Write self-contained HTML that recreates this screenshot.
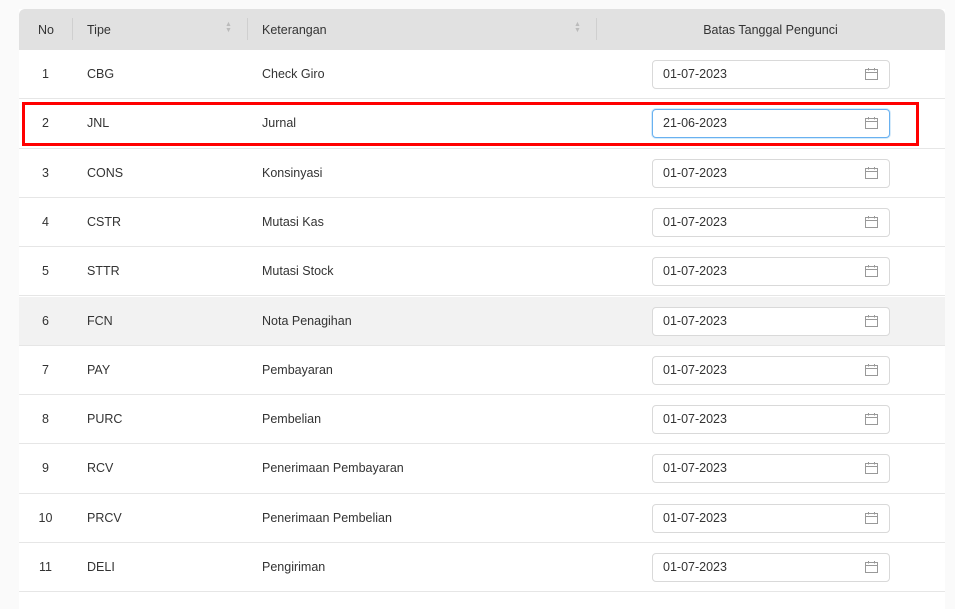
<!DOCTYPE html>
<html><head><meta charset="utf-8"><style>
body{margin:0;width:955px;height:589px;overflow:hidden;background:#fafafa;font-family:"Liberation Sans",sans-serif;font-size:12.5px;color:#333;position:relative}
.t{position:absolute;left:19px;top:9px;width:926px;height:600px;background:#fff}
.h{position:absolute;left:0;top:0;width:926px;height:41px;background:#e1e1e1;border-radius:6px 6px 0 0}
.c{position:absolute;line-height:16px}
.sep{position:absolute;top:9px;width:1px;height:22px;background:#cfcfcf}
.r{position:absolute;left:0;width:926px;border-bottom:1px solid #e6e6e6;box-sizing:border-box}
.in{position:absolute;left:633px;width:238px;height:29px;border:1px solid #d9d9d9;border-radius:4px;box-sizing:border-box;background:#fff}
.in span{position:absolute;left:10px;top:6px}
.in svg{position:absolute;right:11px;top:7px}
.sort{position:absolute;top:13px;font-size:7px;color:#bbb;line-height:6px}
</style></head><body>
<div class="t">
<div class="h">
<div class="c" style="left:19px;top:13px">No</div>
<div class="sep" style="left:53px"></div>
<div class="c" style="left:68px;top:13px">Tipe</div>
<div class="sort" style="left:206px">▲<br>▼</div>
<div class="sep" style="left:228px"></div>
<div class="c" style="left:243px;top:13px">Keterangan</div>
<div class="sort" style="left:555px">▲<br>▼</div>
<div class="sep" style="left:577px"></div>
<div class="c" style="left:577px;width:349px;text-align:center;top:13px">Batas Tanggal Pengunci</div>
</div>
<div id="rows"></div>
</div>
<div style="position:absolute;left:22px;top:102px;width:897px;height:44px;border:3px solid #f00;box-sizing:border-box"></div>
<script>
var d=[["1","CBG","Check Giro"],["2","JNL","Jurnal"],["3","CONS","Konsinyasi"],["4","CSTR","Mutasi Kas"],["5","STTR","Mutasi Stock"],["6","FCN","Nota Penagihan"],["7","PAY","Pembayaran"],["8","PURC","Pembelian"],["9","RCV","Penerimaan Pembayaran"],["10","PRCV","Penerimaan Pembelian"],["11","DELI","Pengiriman"]];
var ico='<svg width="13" height="12" viewBox="0 0 13 12" fill="none" stroke="#999" stroke-width="1"><rect x="0.5" y="1.5" width="12" height="10"/><line x1="0.5" y1="4.5" x2="12.5" y2="4.5"/><line x1="3.5" y1="0" x2="3.5" y2="2.5"/><line x1="9.5" y1="0" x2="9.5" y2="2.5"/></svg>';
var h="";
d.forEach(function(r,i){var top=41+i*49.3;
h+='<div class="r" style="top:'+top+'px;height:49.3px;'+(i==5?'background:#f2f2f2':'')+'">'
+'<div class="c" style="left:0;width:53px;text-align:center;top:16px">'+r[0]+'</div>'
+'<div class="c" style="left:68px;top:16px">'+r[1]+'</div>'
+'<div class="c" style="left:243px;top:16px">'+r[2]+'</div>'
+'<div class="in" style="top:10px;'+(i==1?'border-color:#69b1f0;box-shadow:0 0 0 1px #d6ebfb':'')+'"><span>'+(i==1?'21-06-2023':'01-07-2023')+'</span>'+ico+'</div></div>';});
document.getElementById("rows").innerHTML=h;
</script>
</body></html>
